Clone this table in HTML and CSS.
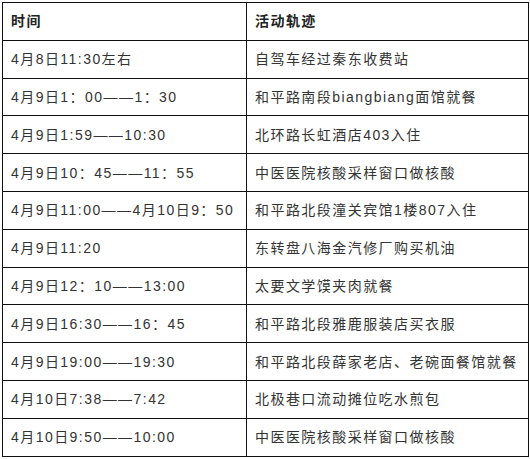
FILE: index.html
```html
<!DOCTYPE html>
<html lang="zh">
<head>
<meta charset="utf-8">
<link rel="stylesheet" href="styles.css">
</head>
<body>
<table class="track">
  <colgroup><col class="c-time"><col class="c-act"></colgroup>
  <thead>
    <tr><th>时间</th><th>活动轨迹</th></tr>
  </thead>
  <tbody>
    <tr><td>4月8日11:30左右</td><td>自驾车经过秦东收费站</td></tr>
    <tr><td>4月9日1：00——1：30</td><td>和平路南段biangbiang面馆就餐</td></tr>
    <tr><td>4月9日1:59——10:30</td><td>北环路长虹酒店403入住</td></tr>
    <tr><td>4月9日10：45——11：55</td><td>中医医院核酸采样窗口做核酸</td></tr>
    <tr><td>4月9日11:00——4月10日9：50</td><td>和平路北段潼关宾馆1楼807入住</td></tr>
    <tr><td>4月9日11:20</td><td>东转盘八海金汽修厂购买机油</td></tr>
    <tr><td>4月9日12：10——13:00</td><td>太要文学馍夹肉就餐</td></tr>
    <tr><td>4月9日16:30——16：45</td><td>和平路北段雅鹿服装店买衣服</td></tr>
    <tr><td>4月9日19:00——19:30</td><td>和平路北段薛家老店、老碗面餐馆就餐</td></tr>
    <tr><td>4月10日7:38——7:42</td><td>北极巷口流动摊位吃水煎包</td></tr>
    <tr><td>4月10日9:50——10:00</td><td>中医医院核酸采样窗口做核酸</td></tr>
  </tbody>
</table>
</body>
</html>
```

FILE: styles.css
```css
html, body {
  margin: 0;
  padding: 0;
  background: #fff;
}
body {
  padding: 2px 0 0 2px;
  font-family: "Liberation Sans", "Noto Sans CJK SC", sans-serif;
  font-size: 14px;
  color: #333;
}
.track {
  border-collapse: collapse;
  width: 526px;
  table-layout: fixed;
}
.c-time { width: 244px; }
.c-act { width: 282px; }
.track th,
.track td {
  border: 1px solid #111;
  height: 36.8px;
  padding: 0 8px;
  text-align: left;
  vertical-align: middle;
  letter-spacing: 1.45px;
  white-space: nowrap;
  line-height: 20px;
}
.track th {
  font-weight: bold;
  color: #222;
}
```
